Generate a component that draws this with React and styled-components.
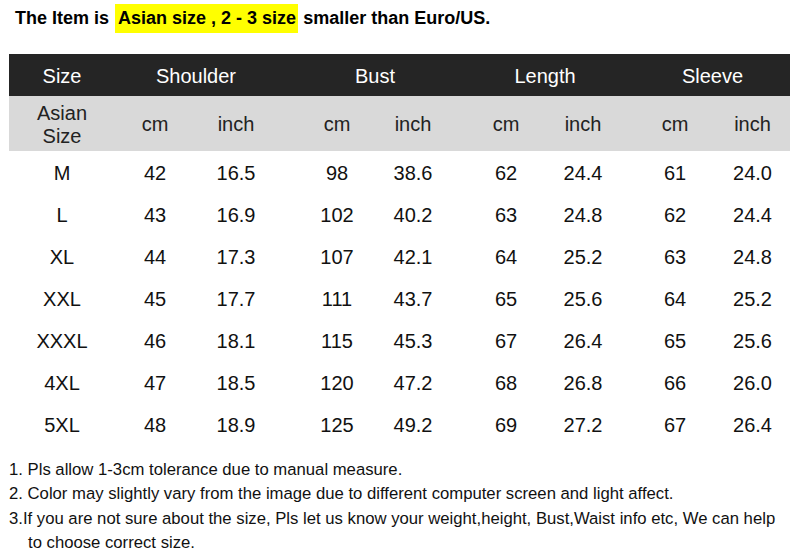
import React from 'react';
import styled, { createGlobalStyle } from 'styled-components';

const GlobalStyle = createGlobalStyle`
    body {
        margin: 0;
        background: #fff;
        font-family: 'Liberation Sans', Arial, sans-serif;
        color: #000;
    }
`;

// width of each column and a nudge for where its text sits
const columns = [
    { w: 106, dx: 0 },
    { w: 80, dx: 0 },
    { w: 82, dx: 0 },
    { w: 100, dx: 10 },
    { w: 78, dx: -3 },
    { w: 84, dx: 9 },
    { w: 86, dx: 1 },
    { w: 90, dx: 5 },
    { w: 75, dx: 0 },
];

const groups = [
    { label: 'Size', span: 1, dx: 0 },
    { label: 'Shoulder', span: 2, dx: 0 },
    { label: 'Bust', span: 2, dx: 9 },
    { label: 'Length', span: 2, dx: 5 },
    { label: 'Sleeve', span: 2, dx: 5 },
];

const rows = [
    ['M', 42, '16.5', 98, '38.6', 62, '24.4', 61, '24.0'],
    ['L', 43, '16.9', 102, '40.2', 63, '24.8', 62, '24.4'],
    ['XL', 44, '17.3', 107, '42.1', 64, '25.2', 63, '24.8'],
    ['XXL', 45, '17.7', 111, '43.7', 65, '25.6', 64, '25.2'],
    ['XXXL', 46, '18.1', 115, '45.3', 67, '26.4', 65, '25.6'],
    ['4XL', 47, '18.5', 120, '47.2', 68, '26.8', 66, '26.0'],
    ['5XL', 48, '18.9', 125, '49.2', 69, '27.2', 67, '26.4'],
];

const notes = [
    { text: '1. Pls allow 1-3cm tolerance due to manual measure.', indent: 0 },
    { text: '2. Color may slightly vary from the image due to different computer screen and light affect.', indent: 0 },
    { text: '3.If you are not sure about the size, Pls let us know your weight,height, Bust,Waist info etc, We can help', indent: 0 },
    { text: 'to choose correct size.', indent: 19 },
];

export default function App() {
    return (
        <Page>
            <GlobalStyle />
            <Title>
                The Item is <Mark>Asian size , 2 - 3 size</Mark> smaller than Euro/US.
            </Title>
            <Table>
                <HeadRow>
                    {groups.map(g => (
                        <Cell key={g.label} span={g.span} dx={g.dx}>
                            {g.label}
                        </Cell>
                    ))}
                </HeadRow>
                <UnitRow>
                    <Cell dx={0}>
                        Asian
                        <br />
                        Size
                    </Cell>
                    {['cm', 'inch', 'cm', 'inch', 'cm', 'inch', 'cm', 'inch'].map((u, i) => (
                        <Cell key={i} dx={columns[i + 1].dx}>
                            {u}
                        </Cell>
                    ))}
                </UnitRow>
                {rows.map(r => (
                    <DataRow key={r[0]}>
                        {r.map((v, i) => (
                            <Cell key={i} dx={columns[i].dx}>
                                {v}
                            </Cell>
                        ))}
                    </DataRow>
                ))}
            </Table>
            <Notes>
                {notes.map((n, i) => (
                    <Note key={i} indent={n.indent}>
                        {n.text}
                    </Note>
                ))}
            </Notes>
        </Page>
    );
}

const Page = styled.div`
    width: 800px;
    height: 554px;
    overflow: hidden;
`;

const Title = styled.div`
    height: 54px;
    padding: 4px 0 0 15px;
    box-sizing: border-box;
    font-size: 18px;
    font-weight: bold;
    line-height: 29px;
    white-space: pre;
`;

const Mark = styled.span`
    display: inline-block;
    background: #ffff00;
    padding: 0 2px 0 3px;
    margin-left: 1px;
`;

const Row = styled.div`
    display: grid;
    grid-template-columns: ${columns.map(c => `${c.w}px`).join(' ')};
    align-items: center;
    font-size: 20px;
`;

const HeadRow = styled(Row)`
    height: 42px;
    padding-top: 2px;
    box-sizing: border-box;
    background: #252525;
    color: #fff;
`;

const UnitRow = styled(Row)`
    height: 55px;
    padding-top: 2px;
    box-sizing: border-box;
    background: #d9d9d9;
    color: #222;
    line-height: 23px;
`;

const DataRow = styled(Row)`
    height: 42px;
    padding-top: 2px;
    box-sizing: border-box;
    color: #111;
`;

const Cell = styled.div`
    grid-column: span ${({ span }) => span || 1};
    text-align: center;
    padding-left: ${({ dx }) => (dx > 0 ? dx * 2 : 0)}px;
    padding-right: ${({ dx }) => (dx < 0 ? -dx * 2 : 0)}px;
`;

const Table = styled.div`
    width: 781px;
    margin-left: 9px;
`;

const Notes = styled.div`
    margin-top: 13px;
    padding-left: 9px;
    font-size: 16.7px;
    line-height: 24.4px;
    color: #111;
`;

const Note = styled.div`
    white-space: nowrap;
    padding-left: ${({ indent }) => indent}px;
`;
